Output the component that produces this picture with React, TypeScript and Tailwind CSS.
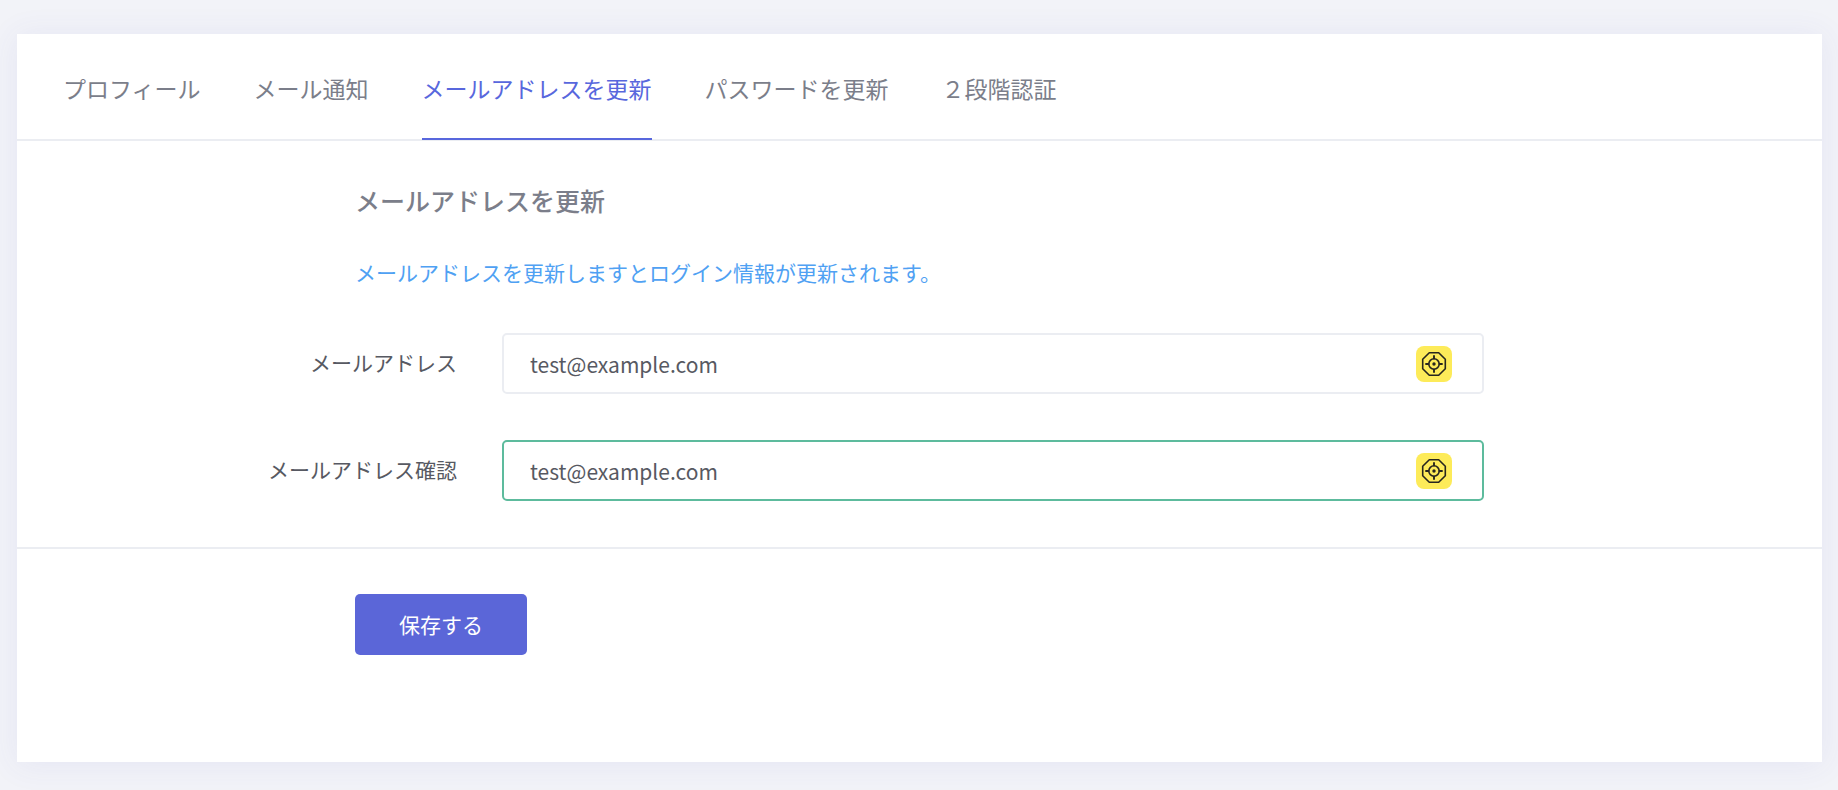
import { useState } from "react";

const tabs = [
  { id: "profile", label: "プロフィール" },
  { id: "notifications", label: "メール通知" },
  { id: "email", label: "メールアドレスを更新" },
  { id: "password", label: "パスワードを更新" },
  { id: "two-factor", label: "２段階認証" },
];

function TargetBadge() {
  return (
    <svg
      viewBox="0 0 36 36"
      aria-hidden="true"
      className="pointer-events-none absolute top-[13px] right-8 size-9"
    >
      <rect width="36" height="36" rx="8" fill="#fdeb59" />
      <g fill="none" stroke="#27261f" strokeWidth="1.6">
        <path d="M13.3 6.7h9.4l6.6 6.6v9.4l-6.6 6.6h-9.4l-6.6-6.6v-9.4z" strokeLinejoin="round" />
        <circle cx="18" cy="18" r="5.2" />
        <path d="M18 9.3v4M18 22.7v4M9.3 18h4M22.7 18h4" strokeWidth="1.9" />
      </g>
      <circle cx="18" cy="18" r="1.7" fill="#27261f" />
    </svg>
  );
}

type FieldProps = {
  id: string;
  label: string;
  value: string;
  onChange: (value: string) => void;
  borderClass: string;
};

function Field({ id, label, value, onChange, borderClass }: FieldProps) {
  return (
    <div className="grid grid-cols-[minmax(0,485fr)_minmax(0,982fr)_minmax(0,338fr)] items-center">
      <label
        htmlFor={id}
        className="pr-[45px] pb-1 text-right text-[21px] leading-9 text-[#575962]"
      >
        {label}
      </label>
      <div className="relative">
        <input
          id={id}
          type="email"
          value={value}
          onChange={(e) => onChange(e.target.value)}
          className={`block h-[61px] w-full rounded-[5px] border-2 bg-white pr-20 pl-[26px] text-[21px] text-[#575962] outline-none ${borderClass}`}
        />
        <TargetBadge />
      </div>
    </div>
  );
}

export default function App() {
  const [email, setEmail] = useState("test@example.com");
  const [confirmation, setConfirmation] = useState("test@example.com");

  return (
    <div className="min-h-screen bg-[#f2f3f8] pt-[34px] pr-4 pb-7 pl-[17px] font-['Noto_Sans_CJK_JP',sans-serif]">
      <main className="bg-white shadow-[0_2px_30px_2px_rgba(69,65,178,0.07)]">
        <nav className="flex gap-[53px] border-b-2 border-[#ebedf2] px-[46px]">
          {tabs.map((tab) => (
            <a
              key={tab.id}
              href={`#${tab.id}`}
              aria-current={tab.id === "email" ? "page" : undefined}
              className={`-mb-px border-b-2 pt-9 pb-8 text-[23px] leading-9 whitespace-nowrap ${
                tab.id === "email"
                  ? "border-[#5867dd] text-[#5867dd]"
                  : "border-transparent text-[#7b7e8a]"
              }`}
            >
              {tab.label}
            </a>
          ))}
        </nav>
        <form onSubmit={(e) => e.preventDefault()}>
          <div className="border-b-2 border-[#ebedf2] pt-[41px] pb-[46px]">
            <div className="grid grid-cols-[minmax(0,338fr)_minmax(0,1467fr)]">
              <div className="col-start-2 flex flex-col gap-9">
                <h1 className="text-[25px] leading-9 font-medium text-[#7b7e8a]">
                  メールアドレスを更新
                </h1>
                <p className="text-[21px] leading-9 text-[#4fa1f3]">
                  メールアドレスを更新しますとログイン情報が更新されます。
                </p>
              </div>
            </div>
            <div className="mt-[43px] flex flex-col gap-[46px]">
              <Field
                id="email"
                label="メールアドレス"
                value={email}
                onChange={setEmail}
                borderClass="border-[#ebedf2]"
              />
              <Field
                id="email-confirmation"
                label="メールアドレス確認"
                value={confirmation}
                onChange={setConfirmation}
                borderClass="border-[#5dbb9d]"
              />
            </div>
          </div>
          <div className="grid grid-cols-[minmax(0,338fr)_minmax(0,1467fr)] pt-[45px] pb-[107px]">
            <button
              type="submit"
              className="col-start-2 h-[61px] justify-self-start rounded-[5px] bg-[#5b66d8] px-11 text-[21px] text-white"
            >
              保存する
            </button>
          </div>
        </form>
      </main>
    </div>
  );
}
